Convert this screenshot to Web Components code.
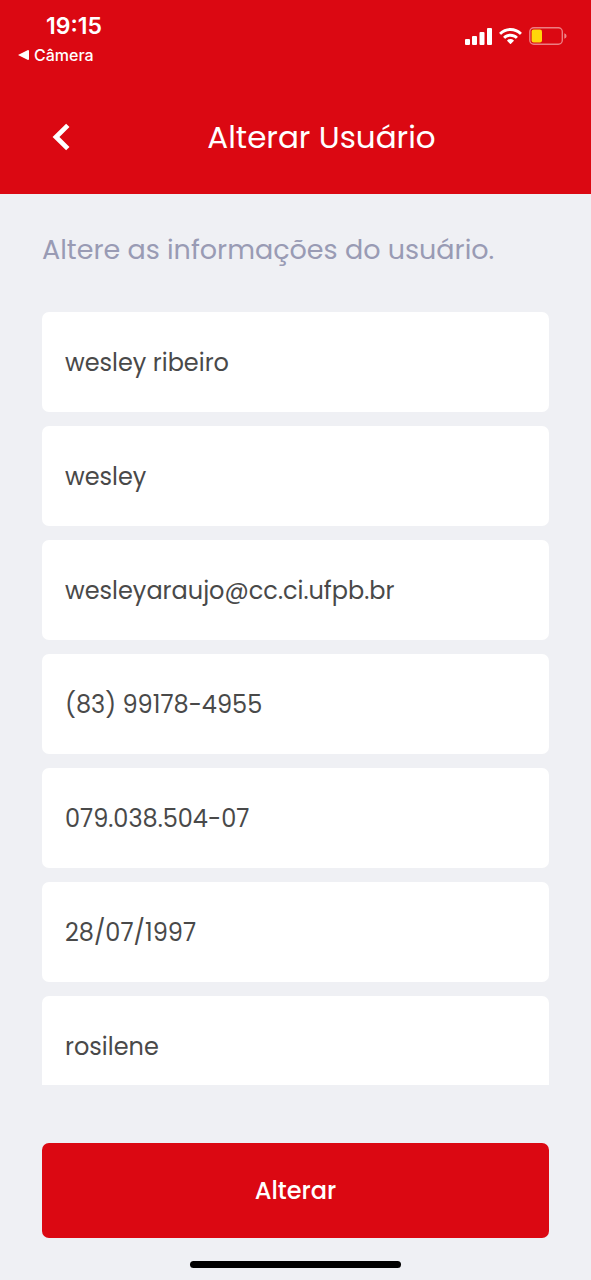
<!DOCTYPE html>
<html lang="pt-BR">
<head>
<meta charset="utf-8">
<meta name="viewport" content="width=device-width, initial-scale=1">
<title>Alterar Usuário</title>
<style>
  :root {
    --red: #db0812;
    --surface: #eff0f4;
    --muted: #999bb4;
    --ink: #494949;
    --gutter: 42px;
  }
  body {
    margin: 0;
    background: var(--surface);
    font-family: Poppins, Inter, "Open Sans", sans-serif;
  }
</style>
</head>
<body>
<user-edit-page></user-edit-page>
<script>
  class BaseElement extends HTMLElement {
    constructor() {
      super();
      const root = this.attachShadow({ mode: "open" });
      root.innerHTML = this.constructor.markup;
    }
  }

  class StatusBar extends BaseElement {
    static markup = `
      <style>
        :host { display: flex; justify-content: space-between; padding: 10px 24px 0 18px; color: #fff; font-family: Inter, sans-serif; }
        .time { margin-left: 28px; font-size: 23px; font-weight: 600; line-height: 32px; }
        a { display: flex; align-items: center; gap: 5px; color: inherit; text-decoration: none; font-size: 16px; font-weight: 500; line-height: 26px; }
        .icons { display: flex; align-items: center; gap: 7px; height: 52px; }
        svg { display: block; fill: currentColor; }
      </style>
      <div>
        <div class="time">19:15</div>
        <a href="#camera"><svg width="11" height="10" viewBox="0 0 11 10" aria-hidden="true"><path d="M0 5 10 0Q11 0 11 1V9Q11 10 10 10Z"/></svg>Câmera</a>
      </div>
      <div class="icons">
        <svg width="27" height="17" viewBox="0 0 27 17" role="img" aria-label="Sinal"><rect y="11" width="5" height="6" rx="1"/><rect x="7" y="8" width="5" height="9" rx="1"/><rect x="14.500" y="4" width="5" height="13" rx="1"/><rect x="22" width="5" height="17" rx="1"/></svg>
        <svg width="23" height="17" viewBox="0 0 23 17" role="img" aria-label="Wi-Fi"><path d="M11.500 0C7.200 0 3.300 1.700.4 4.400q-.4.400 0 .8l1.300 1.300q.4.400.8 0C4.900 4.300 8 3.100 11.500 3.100s6.600 1.200 9 3.400q.4.400.8 0l1.300-1.300q.4-.4 0-.8C19.700 1.700 15.800 0 11.500 0Z"/><path d="M11.500 5.700c-2.700 0-5.200 1-7.100 2.700q-.4.400 0 .8l1.400 1.400q.4.400.8 0c1.300-1.100 3-1.800 4.900-1.800s3.600.7 4.900 1.800q.4.400.8 0l1.400-1.400q.4-.4 0-.8c-1.900-1.700-4.400-2.700-7.100-2.700Z"/><path d="M11.500 11.100c-1.200 0-2.300.4-3.200 1.100q-.4.400 0 .8l2.700 2.700q.5.500 1 0l2.700-2.700q.4-.4 0-.8c-.9-.7-2-1.100-3.200-1.100Z"/></svg>
        <svg width="38" height="18" viewBox="0 0 38 18" role="img" aria-label="Bateria"><rect x=".8" y=".8" width="32.500" height="16.400" rx="4" fill="none" stroke="#fff" stroke-opacity=".48" stroke-width="1.400"/><path d="M35.300 6.200Q37.600 7 37.600 9T35.300 11.800Z" fill-opacity=".5"/><rect x="2.600" y="2.600" width="10.400" height="12.800" rx="2" fill="#ffd60a"/></svg>
      </div>`;
  }

  class PageHeader extends BaseElement {
    static markup = `
      <style>
        :host { display: flex; flex-direction: column; background: var(--red); color: #fff; }
        nav { display: grid; grid-template-columns: 52px 1fr; align-items: center; padding: 35px 35px 23px; }
        button { display: grid; place-items: center; width: 52px; height: 68px; padding: 0; border: 0; background: none; color: inherit; }
        h1 { margin: 0; font-size: 31px; font-weight: 400; line-height: 48px; text-align: center; }
      </style>
      <status-bar></status-bar>
      <nav>
        <button type="button" aria-label="Voltar"><svg width="18" height="28" viewBox="0 0 18 28" fill="none" stroke="currentColor" stroke-width="4.800" aria-hidden="true"><path d="M15.800 2.400 4 14l11.800 11.600"/></svg></button>
        <h1><slot></slot></h1>
      </nav>`;
  }

  class TextField extends BaseElement {
    static markup = `
      <style>
        :host { display: block; flex: none; }
        input { display: block; box-sizing: border-box; width: 100%; height: 100px; padding: 0 23px; border: 0; border-radius: 7px; background: #fff; color: var(--ink); font: inherit; font-size: 24px; outline-color: var(--red); }
      </style>
      <input>`;
    connectedCallback() {
      const input = this.shadowRoot.querySelector("input");
      input.type = this.getAttribute("type") || "text";
      input.value = this.getAttribute("value");
      input.setAttribute("aria-label", this.getAttribute("label"));
    }
  }

  class PrimaryButton extends BaseElement {
    static markup = `
      <style>
        :host { display: block; }
        button { display: block; width: 100%; height: 95px; padding: 0; border: 0; border-radius: 7px; background: var(--red); color: #fff; font: inherit; font-size: 24px; font-weight: 500; }
      </style>
      <button type="button"><slot></slot></button>`;
  }

  class HomeIndicator extends BaseElement {
    static markup = `
      <style>
        :host { display: flex; justify-content: center; padding: 23px 0 12px; }
        div { width: 211px; height: 7px; border-radius: 4px; background: #000; }
      </style>
      <div></div>`;
  }

  class UserEditPage extends BaseElement {
    static markup = `
      <style>
        :host { display: flex; flex-direction: column; height: 100vh; }
        page-header { flex: none; }
        main { display: flex; flex: 1; flex-direction: column; min-height: 0; padding: 35px var(--gutter) 0; }
        p { margin: 0 0 41px; color: var(--muted); font-size: 27px; line-height: 42px; }
        .fields { display: flex; flex: 1; flex-direction: column; gap: 14px; min-height: 0; overflow-y: auto; scrollbar-width: none; }
        primary-button { margin-top: 58px; }
      </style>
      <page-header>Alterar Usuário</page-header>
      <main>
        <p>Altere as informações do usuário.</p>
        <div class="fields">
          <text-field label="Nome" value="wesley ribeiro"></text-field>
          <text-field label="Usuário" value="wesley"></text-field>
          <text-field label="E-mail" type="email" value="wesleyaraujo@cc.ci.ufpb.br"></text-field>
          <text-field label="Telefone" type="tel" value="(83) 99178-4955"></text-field>
          <text-field label="CPF" value="079.038.504-07"></text-field>
          <text-field label="Data de nascimento" value="28/07/1997"></text-field>
          <text-field label="Nome da mãe" value="rosilene"></text-field>
        </div>
        <primary-button>Alterar</primary-button>
      </main>
      <home-indicator></home-indicator>`;
  }

  customElements.define("status-bar", StatusBar);
  customElements.define("page-header", PageHeader);
  customElements.define("text-field", TextField);
  customElements.define("primary-button", PrimaryButton);
  customElements.define("home-indicator", HomeIndicator);
  customElements.define("user-edit-page", UserEditPage);
</script>
</body>
</html>
